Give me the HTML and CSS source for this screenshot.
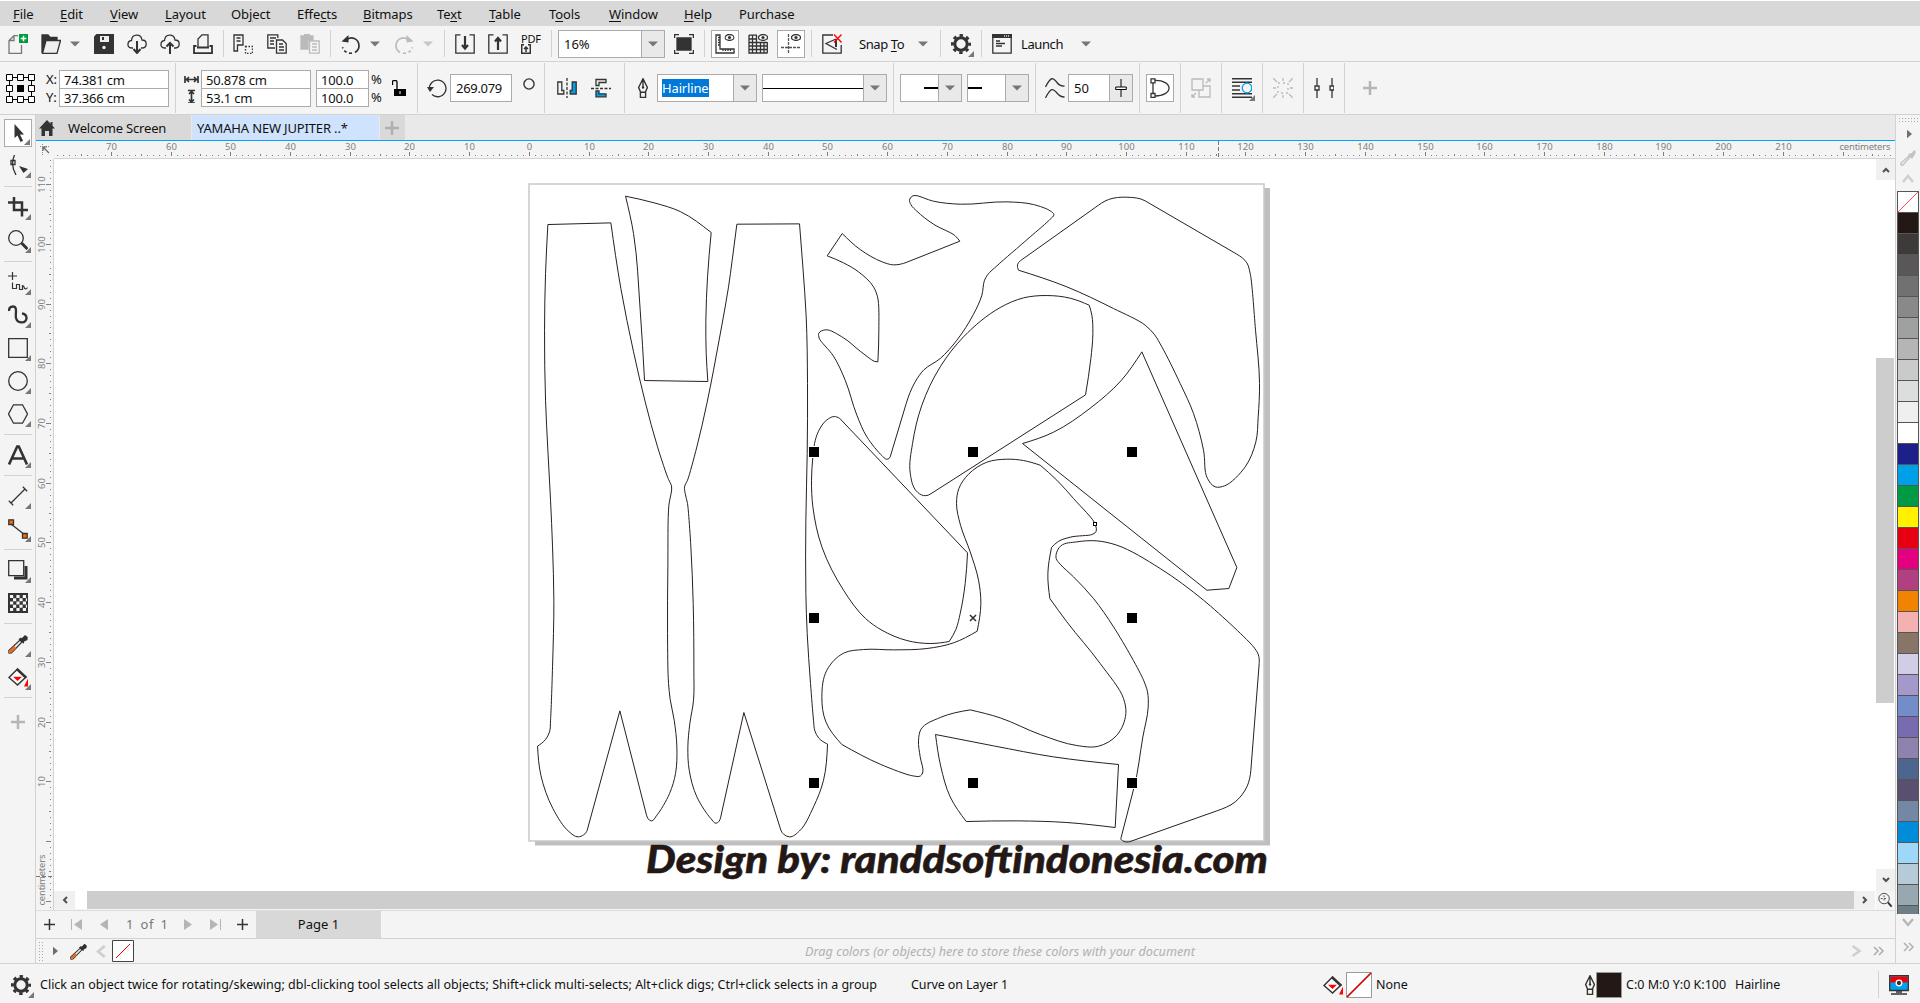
FILE: index.html
```html
<!DOCTYPE html>
<html lang="en">
<head>
<meta charset="utf-8">
<title>YAMAHA NEW JUPITER</title>
<link rel="stylesheet" href="styles.css">
</head>
<body>
<svg class="sprite" aria-hidden="true">
  <symbol id="gear" viewBox="0 0 20 20"><circle cx="10" cy="10" r="6.2" fill="none" stroke="#333" stroke-width="3"/><circle cx="10" cy="10" r="8.6" fill="none" stroke="#333" stroke-width="2.8" stroke-dasharray="3.4 3.354" stroke-dashoffset="1.7"/></symbol>
  <symbol id="pen" viewBox="0 0 20 20"><path d="M10 .7 5.6 9.5l2 4.6h4.8l2-4.6zM10 1v8M7.4 14.4h5.2v5H7.4z" fill="none" stroke="#333" stroke-width="1.4"/><circle cx="10" cy="9.5" r="1.2" fill="#333"/></symbol>
  <symbol id="dropper" viewBox="0 0 20 20"><path d="M1 19 .8 16.500 12 6l2 2L3.500 18.800z" fill="#eee" stroke="#333" stroke-width="1.2"/><path d="m1 19 .3-2.500L6 12l2.200 2-4.700 4.600z" fill="#ec6c17"/><path d="m10.500 5.200 2-1.500 1.500.3L17 1l2.700 2-.2 3-3.300 1.500-.5 2.300z" fill="#2d3036"/></symbol>
  <symbol id="bucket" viewBox="0 0 20 20"><path d="M9.500 2 1 10.500 9.500 18l8.500-8z" fill="#fff" stroke="#333" stroke-width="1.500"/><path d="m9.500 1 9.500 9-2 1.500L8 3z" fill="#333"/><path d="M5 9.800h9L9.500 14zM16 19.500l4-8v8z" fill="red"/></symbol>
  <symbol id="caret" viewBox="0 0 10 6"><path d="M0 .5h10L5 5.500z"/></symbol>
  <symbol id="eye" viewBox="0 0 10 7"><ellipse cx="5" cy="3.500" rx="4.500" ry="2.900" fill="#fff" stroke="#333"/><circle cx="5" cy="3.500" r="1.600" fill="#333"/></symbol>
</svg>

<nav class="menu"><span><u>F</u>ile</span><span><u>E</u>dit</span><span><u>V</u>iew</span><span><u>L</u>ayout</span><span>Ob<u>j</u>ect</span><span>Effe<u>c</u>ts</span><span><u>B</u>itmaps</span><span>Te<u>x</u>t</span><span><u>T</u>able</span><span>T<u>o</u>ols</span><span><u>W</u>indow</span><span><u>H</u>elp</span><span>Purchase</span></nav>

<div class="bar standard">
  <svg class="i" viewBox="0 0 20 20"><path d="M10 1.700H6L1 6.500v12.800h12.500V11M1 6.500h5v-5" stroke="#777"/><path d="M11 0h9v9h-9z" fill="#009b3e" stroke="none"/><path d="M15.500 1.700v5.600M12.700 4.500h5.600" stroke="#fff" stroke-width="1.500"/></svg>
  <svg class="i" viewBox="0 0 20 20"><path d="M1 19V1h6l2 2.500h7v3" fill="#333"/><path d="M1.500 19.300 5 6.500h14.500L16 19.300z" fill="#eee"/></svg>
  <svg class="c"><use href="#caret"/></svg>
  <svg class="i" viewBox="0 0 20 20"><path d="M0 2.500 2.500 0H20v20H0z" fill="#333" stroke="none"/><path d="M6 2h9v6H6z" fill="#eee" stroke="none"/><path d="M8 3h2v3H8z" fill="#333" stroke="none"/><circle cx="10" cy="13.500" r="1.700" fill="#eee" stroke="none"/></svg>
  <svg class="i" viewBox="0 0 20 20"><path d="M6 14H4.500C-.5 13.500 0 7 4.500 6.500 5-.5 14-.5 15 6c5.500 0 5.500 7.500.5 8H14"/><path d="M10 7v11M6.500 15l3.500 4 3.500-4" stroke-width="2"/></svg>
  <svg class="i" viewBox="0 0 20 20"><path d="M6 14H4.500C-.5 13.500 0 7 4.500 6.500 5-.5 14-.5 15 6c5.500 0 5.500 7.500.5 8H14"/><path d="M10 20V9M6.500 12.500 10 9l3.500 3.500" stroke-width="2"/></svg>
  <svg class="i" viewBox="0 0 20 20"><path d="M5 14V5l4-4.200h6V14"/><path d="M3.500 12H1v7.200h18V12h-2.500M4 13.500h12" stroke-width="1.800"/></svg>
  <b class="sep"></b>
  <svg class="i" viewBox="0 0 20 20"><path d="M10 9V1H1v16h3.500V11H10zM3.500 4h4M3.500 7h4"/><path d="M12.500 12.500H19.500v7h-7z" stroke-dasharray="1.500 1.500"/></svg>
  <svg class="i" viewBox="0 0 20 20"><path d="M8 14H.8V.8h10V4M3 4h6M3 7h4M3 10h4"/><path d="M9.500 6h6l3.700 3.500v9.700H9.500zM12 10h4M12 13h5M12 16h5"/></svg>
  <svg class="i faint" viewBox="0 0 20 20"><path d="M1 2h12v4H8v9H1z" fill="#bbb"/><path d="M4 0h6v3H4z" fill="#bbb" stroke="none"/><path d="M9.500 7h9.700v12.200H9.500zM12 10h5M12 13h5M12 16h5"/></svg>
  <b class="sep"></b>
  <svg class="i" viewBox="0 0 20 20"><path d="M5 6.500C10 1 18 5 18 12c0 3-1.500 5-4 6.500" stroke-width="1.700"/><path d="M11 19.200c-5 .5-8-2-9.500-6" stroke-dasharray="3 2.500" stroke-width="1.700"/><path d="M.500 7.500 7.500 1v7.500z" fill="#333" stroke="none"/></svg>
  <svg class="c"><use href="#caret"/></svg>
  <svg class="i faint" viewBox="0 0 20 20"><path d="M15 6.500C10 1 2 5 2 12c0 3 1.500 5 4 6.500" stroke-width="1.700"/><path d="M9 19.200c5 .5 8-2 9.500-6" stroke-dasharray="3 2.500" stroke-width="1.700"/><path d="m19.500 7.500-7-6.500v7.500z" fill="#bbb" stroke="none"/></svg>
  <svg class="c pale"><use href="#caret"/></svg>
  <b class="sep"></b>
  <svg class="i" viewBox="0 0 20 20"><path d="M5.500.8H.8v18.400h18.400V.8h-4.700"/><path d="M10 2v12M7 11l3 3.500 3-3.500" stroke-width="2.200"/></svg>
  <svg class="i" viewBox="0 0 20 20"><path d="M5.500.8H.8v18.400h18.400V.8h-4.700"/><path d="M10 16V4M7 7.500 10 4l3 3.500" stroke-width="2.200"/></svg>
  <span class="pdf">PDF<svg viewBox="0 0 10 10"><path d="M3 .7H.7v8.600h8.600V.7H7M5 8V3M3 5l2-2 2 2" fill="none" stroke="#333" stroke-width="1.500"/></svg></span>
  <b class="sep"></b>
  <span class="combo zoom"><span>16%</span><em><svg class="c"><use href="#caret"/></svg></em></span>
  <svg class="i" viewBox="0 0 20 20"><path d="M3 4h14v12H3z" fill="#333"/><path d="M.6 4V.6H5M15 .6h4.400V4M19.400 16v3.400H15M5 19.400H.6V16"/></svg>
  <b class="sep"></b>
  <span class="toggle"><svg class="i" viewBox="0 0 20 20"><path d="M1 1h4v14h14v4H1zM3 3.500h2M3 6h2M3 8.500h2M3 11h2M8 17v-2M10.500 17v-2M13 17v-2M15.500 17v-2"/><use href="#eye" x="9.500" width="10" height="7"/></svg></span>
  <svg class="i" viewBox="0 0 20 20"><path d="M1 1v18h18.500M4.500 1v18M8.500 1v18M12.500 8v11M16 8v11M19.300 8v11M1 1.200h8M1 5h8M1 8.500h18M1 12h18M1 15.500h18"/><use href="#eye" x="10" width="10" height="7"/></svg>
  <span class="toggle"><svg class="i" viewBox="0 0 20 20"><path d="M7.500 0v20M0 13.500h20" stroke="#555" stroke-dasharray="3 1"/><use href="#eye" x="10" width="10" height="7"/></svg></span>
  <b class="sep"></b>
  <svg class="i" viewBox="0 0 20 20"><path d="M11 1H.8v18.200h18.400V11M14 5 4 9.500l11 6"/><path d="m14 5 0 8" stroke-width="2"/><path d="m12 .5 7.500 8M19.500.5l-7.500 8" stroke="red"/></svg>
  <span class="t">Snap <u>T</u>o</span>
  <svg class="c"><use href="#caret"/></svg>
  <b class="sep"></b>
  <span class="flag"><svg class="i"><use href="#gear"/></svg></span>
  <b class="sep"></b>
  <svg class="i" viewBox="0 0 20 20"><path d="M.8.8h18.400v18.400H.8zM4 7h4M4 9.500h9M4 12h6"/><path d="M0 0h20v4H0z" fill="#333" stroke="none"/><path d="M12 2h6" stroke="#ddd" stroke-dasharray="1 1"/></svg>
  <span class="t">Launch</span>
  <svg class="c"><use href="#caret"/></svg>
</div>

<div class="bar property">
  <svg class="origin" viewBox="0 0 29 29"><path d="M3.500 3.500h22v22h-22z" fill="none" stroke="#000"/><g fill="#fff" stroke="#000"><path d="M.5.500h6v6h-6zM11.500.500h6v6h-6zM22.500.500h6v6h-6zM.5 11.500h6v6h-6zM22.500 11.500h6v6h-6zM.5 22.500h6v6h-6zM11.500 22.500h6v6h-6zM22.500 22.500h6v6h-6z"/></g><path d="M11 11h7v7h-7z"/></svg>
  <span class="pair"><i>X:</i><i>Y:</i></span>
  <span class="fields"><i>74.381 cm</i><i>37.366 cm</i></span>
  <b class="sep"></b>
  <svg class="size" viewBox="0 0 15 30"><path d="M1 3v7M14 3v7M2 6.500h11M5 4 2.500 6.500 5 9M10 4l2.500 2.500L10 9M4 17.500h7M4 30h7M7.500 18v12M5 21l2.500-2.500L10 21M5 26.500 7.500 29l2.500-2.500" fill="none" stroke="#333" stroke-width="1.700"/></svg>
  <span class="fields"><i>50.878 cm</i><i>53.1 cm</i></span>
  <span class="fields short"><i>100.0</i><i>100.0</i></span>
  <span class="pair"><i>%</i><i>%</i></span>
  <svg class="lock" viewBox="0 0 14 16"><path d="M2 9h12v7H2z"/><path d="M5 9V2q0-1.500-1.500-1.500H2Q.500.500.500 2v3" fill="none" stroke="#000" stroke-width="1.300"/><path d="M8 11v3" stroke="#fff"/></svg>
  <b class="sep"></b>
  <svg class="i" viewBox="0 0 20 20"><path d="M2.500 12a8.300 8.300 0 1 1 2.500 4.500"/><path d="M0 9h7l-4 5z" fill="#333" stroke="none"/></svg>
  <span class="combo angle"><span>269.079</span></span>
  <svg class="deg" viewBox="0 0 12 12"><circle cx="6" cy="6" r="5.100" fill="none" stroke="#333" stroke-width="1.400"/></svg>
  <b class="sep"></b>
  <svg class="i" viewBox="0 0 20 20"><path d="M.8 4v12h6v-3.500h-2V4z"/><path d="M19.200 4v12h-6v-3.500h2V4z" fill="#00a0f0"/><path d="M10 0v20" stroke-dasharray="3 1.500"/></svg>
  <svg class="i" viewBox="0 0 20 20"><path d="M15 1.500H5V7.500h3V4.500h7z"/><path d="M15 18.800H5v-6h3v3h7z" fill="#00a0f0"/><path d="M0 10.500h20" stroke-dasharray="3 1.500"/></svg>
  <b class="sep"></b>
  <svg class="i nib"><use href="#pen"/></svg>
  <span class="combo width"><span><mark>Hairline</mark></span><em><svg class="c"><use href="#caret"/></svg></em></span>
  <span class="combo style"><span><hr></span><em><svg class="c"><use href="#caret"/></svg></em></span>
  <b class="sep"></b>
  <span class="combo tip start"><span><hr></span><em><svg class="c"><use href="#caret"/></svg></em></span>
  <span class="combo tip end"><span><hr></span><em><svg class="c"><use href="#caret"/></svg></em></span>
  <b class="sep"></b>
  <svg class="i" viewBox="0 0 20 20"><path d="M.5 9C6-2 8-.5 12 4.500q3 4 7.500 3.500M.5 20C6 9 8 10.500 12 15q3 4 7.500 4"/></svg>
  <span class="combo smooth"><span>50</span><em><svg viewBox="0 0 12 18"><path d="M6 0v18" stroke="#000"/><path d="M.700 8h10.600v2.500H.7z" fill="#fff" stroke="#000"/></svg></em></span>
  <b class="sep"></b>
  <span class="toggle"><svg class="i" viewBox="0 0 20 20"><path d="M4 2.500c20-1 20 16 0 15.500M3 4v12"/><path d="M1 .8h4v4H1zM1 15.500h4v4H1z" fill="#fff"/></svg></span>
  <b class="sep"></b>
  <svg class="i faint" viewBox="0 0 20 20"><path d="M1 1h11v11H1zM8 12v7h11V8h-7M1 19l4-4M19 1l-4 4M16 1h3v3M1 16v3h3"/></svg>
  <b class="sep"></b>
  <span class="flag"><svg class="i" viewBox="0 0 20 20"><path d="M0 .8h20M0 4.200h20M0 8h8M0 12h8M0 15.800h20M0 19.300h20" stroke-width="1.500"/><circle cx="15" cy="10" r="4.800" fill="#f4f4f4" stroke="#00a0f0"/></svg></span>
  <b class="sep"></b>
  <svg class="i faint" viewBox="0 0 20 20"><path d="M5 5h10v10H5z" stroke-dasharray="2 3"/><path d="m0 0 4 4M20 0l-4 4M0 20l4-4M20 20l-4-4M10 0v3M10 17v3M0 10h3M17 10h3"/></svg>
  <b class="sep"></b>
  <svg class="i" viewBox="0 0 20 20"><path d="M3 0v7.500M3 12v8M18 0v7.500M18 12v8" stroke="#777" stroke-width="2"/><path d="M1 8h4v4H1zM16 8h4v4h-4z"/></svg>
  <b class="sep"></b>
  <svg class="plus" viewBox="0 0 14 14"><path d="M7 0v14M0 7h14" stroke="#b5b5b5" stroke-width="2.500"/></svg>
</div>

<main>
  <aside class="tools">
    <span class="tool on flag"><svg class="i" viewBox="0 0 20 20"><path d="m6.500 1 0 14 3-2.500 3 6.500 2.500-1.200L12 11.500h4z" fill="#333" stroke="none"/></svg></span>
    <span class="tool flag"><svg class="i" viewBox="0 0 20 20"><path d="M6.500 0Q2 10 8 20M3 5.500h4v4H3z"/><path d="m11 11 9 3-4.500 4z" fill="#333" stroke="none"/></svg></span>
    <b class="rule wide"></b>
    <span class="tool flag"><svg class="i" viewBox="0 0 20 20"><path d="M0 5.500h14v14M6 0v13h14" stroke-width="2.500"/></svg></span>
    <span class="tool flag"><svg class="i" viewBox="0 0 20 20"><circle cx="8" cy="8" r="7.300"/><path d="m13.500 13 6 6" stroke-width="3"/></svg></span>
    <b class="rule wide"></b>
    <span class="tool flag"><svg class="i" viewBox="0 0 20 20"><path d="M0 4h9M4.500 0v8M4.500 10.500v6h4v-4h3v5h3v-4q1.500 0 2 3 2 1 3-1" stroke-width="1.200"/></svg></span>
    <span class="tool flag"><svg class="i" viewBox="0 0 20 20"><path d="M1 6q0-4.500 4-4.500c5 0 2 8 3 11.500 1.500 6 11 6 10.500-.5Q18 9 14 8.500" stroke-width="2.300"/></svg></span>
    <span class="tool flag"><svg class="i" viewBox="0 0 20 20"><path d="M.7.700h18.600v18.600H.7z"/></svg></span>
    <span class="tool flag"><svg class="i" viewBox="0 0 20 20"><circle cx="10" cy="10" r="9.300"/></svg></span>
    <span class="tool flag"><svg class="i" viewBox="0 0 20 20"><path d="M5.500.800h9l5 9.200-5 9.200h-9L.5 10z"/></svg></span>
    <b class="rule"></b>
    <span class="tool flag"><svg class="i" viewBox="0 0 20 20"><path d="m1 19.500 8.200-18h1.600l8.200 18M4 13.500h12" stroke-width="2.600"/></svg></span>
    <b class="rule"></b>
    <span class="tool flag"><svg class="i" viewBox="0 0 20 20"><path d="M3 17 17 3M.8 14.800l4.400 4.400M14.800.8l4.400 4.400"/></svg></span>
    <span class="tool flag"><svg class="i" viewBox="0 0 20 20"><path d="m3 5 14 11"/><path d="M.8.800h4.700v4.700H.8zM14.500 14.500h4.700v4.700h-4.700z" fill="#ff6a00"/></svg></span>
    <b class="rule"></b>
    <span class="tool flag"><svg class="i" viewBox="0 0 20 20"><path d="M6 18h12V6" stroke-width="3"/><path d="M.7.700h15v15H.7z" fill="#f4f4f4"/></svg></span>
    <span class="tool"><svg class="i" viewBox="0 0 20 20"><path d="M0 0h20v20H0z" fill="#333" stroke="none"/><path d="M2 3.500h16M2 10h16M2 16.500h16" stroke="#f4f4f4" stroke-width="3" stroke-dasharray="3.200 3.200"/><path d="M5 6.800h14M5 13.200h14" stroke="#f4f4f4" stroke-width="3" stroke-dasharray="3.200 3.200"/></svg></span>
    <b class="rule"></b>
    <span class="tool flag"><svg class="i"><use href="#dropper"/></svg></span>
    <span class="tool flag"><svg class="i"><use href="#bucket"/></svg></span>
    <b class="rule"></b>
    <span class="tool more"><svg class="plus" viewBox="0 0 14 14"><path d="M7 0v14M0 7h14" stroke="#b5b5b5" stroke-width="2.500"/></svg></span>
  </aside>

  <section class="desk">
    <div class="tabs">
      <span class="tab"><svg viewBox="0 0 16 16"><path d="M8 0 0 8.500h2.500V16H6v-5h4v5h3.500V8.500H16l-2.500-2.700V2h-2v1.700z" fill="#333"/></svg>Welcome Screen</span>
      <span class="tab active">YAMAHA NEW JUPITER ..*</span>
      <span class="tab add"><svg class="plus" viewBox="0 0 14 14"><path d="M7 0v14M0 7h14" stroke="#b0b0b0" stroke-width="2.500"/></svg></span>
    </div>
    <div class="view">
      <svg class="corner" viewBox="0 0 18 18"><path d="M4 5.500h10M6.500 3v12" fill="none" stroke="#888" stroke-dasharray="1 1"/><path d="M7 6l6 6M7 10V6h4" fill="none" stroke="#666" stroke-width="1.200"/></svg>
      <svg class="ruler-x" viewBox="54 141 1841 18"></svg>
      <svg class="ruler-y" viewBox="36 159 18 751"></svg>
      <div class="stage">
        <svg class="art" viewBox="54 159 1822 732">
          <path d="M535 841h735v4.500H535zM1264 188h6v657h-6z" fill="#bfbfbf"/>
          <rect x="529" y="184" width="735" height="657" fill="#fff" stroke="#c9c9c9" stroke-width="1.500"/>
          <g id="curves" transform="translate(520.2 170.200) scale(.33333)"></g>
          <g id="handles"></g>
          <path d="m970 615 6 6M976 615l-6 6" stroke="#333" stroke-width="1.600"/>
          <rect x="1093.500" y="522.500" width="3" height="3" fill="#fff" stroke="#000"/>
          <text class="credit" x="646" y="873" textLength="622" lengthAdjust="spacingAndGlyphs">Design by: randdsoftindonesia.com</text>
        </svg>
        <div class="vscroll"><span><svg viewBox="0 0 8 6"><path d="m1 5 3-3 3 3"/></svg></span><b></b><span class="down"><svg viewBox="0 0 8 6"><path d="m1 1 3 3 3-3"/></svg></span></div>
        <div class="hscroll"><span><svg viewBox="0 0 6 8"><path d="M5 1 2 4l3 3"/></svg></span><b></b><span><svg viewBox="0 0 6 8"><path d="m1 1 3 3-3 3"/></svg></span></div>
        <svg class="nav" viewBox="0 0 20 19"><circle cx="8.500" cy="8" r="5.500" fill="none" stroke="#444"/><path d="m12.500 12 4 4.500" stroke="#333" stroke-width="2"/><path d="M8.500 4.500v7M5 8h7" stroke="#555" stroke-dasharray="2 1.500"/></svg>
      </div>
    </div>
    <div class="pages">
      <svg class="p" viewBox="0 0 11 11"><path d="M5.500 0v11M0 5.500h11" stroke="#333" stroke-width="1.500"/></svg>
      <svg class="p" viewBox="0 0 11 11"><path d="M.500 0v11" stroke="#b5b5b5"/><path d="M11 0v11L3 5.500z" fill="#b5b5b5"/></svg>
      <svg class="p" viewBox="0 0 11 11"><path d="M9 0v11L1 5.500z" fill="#b5b5b5"/></svg>
      <span class="count">1 of 1</span>
      <svg class="p" viewBox="0 0 11 11"><path d="M0 0v11l8-5.500z" fill="#b5b5b5"/></svg>
      <svg class="p" viewBox="0 0 11 11"><path d="M10.500 0v11" stroke="#b5b5b5"/><path d="M0 0v11l8-5.500z" fill="#b5b5b5"/></svg>
      <svg class="p" viewBox="0 0 11 11"><path d="M5.500 0v11M0 5.500h11" stroke="#333" stroke-width="1.500"/></svg>
      <span class="page">Page 1</span>
    </div>
    <div class="docpal">
      <i class="grip"></i>
      <svg class="tri" viewBox="0 0 6 10"><path d="M0 0v10l6-5z"/></svg>
      <svg class="i drop"><use href="#dropper"/></svg>
      <svg class="lt" viewBox="0 0 10 14"><path d="M9 1 2 7l7 6" fill="none" stroke="#cfcfcf" stroke-width="3"/></svg>
      <svg class="none" viewBox="0 0 22 22"><path d="M.5.500h21v21H.5z" fill="#fff" stroke="#444"/><path d="M4 18 18 4" stroke="red"/></svg>
      <span class="hint">Drag colors (or objects) here to store these colors with your document</span>
      <svg class="gt" viewBox="0 0 10 12"><path d="m1 1 7 5-7 5" fill="none" stroke="#cfcfcf" stroke-width="2.500"/></svg>
      <svg class="gt" viewBox="0 0 11 12"><path d="m1 2 4 4-4 4M6 2l4 4-4 4" fill="none" stroke="#aaa" stroke-width="1.500"/></svg>
    </div>
  </section>

  <aside class="palette">
    <i class="grip flat"></i>
    <svg class="tri" viewBox="0 0 6 10"><path d="M0 0v10l6-5z"/></svg>
    <svg class="dim" viewBox="0 0 16 16"><path d="M1 15v-2l8-7 1 1-7 8z" fill="none" stroke="#c2c2c2" stroke-width="1.300"/><path d="m8 4 4-1 2-3 2 2-2 4-2 3z" fill="#c2c2c2"/></svg>
    <svg class="up" viewBox="0 0 12 9"><path d="m1 8 5-6 5 6" fill="none" stroke="#cfcfcf" stroke-width="2.500"/></svg>
    <div class="swatches"></div>
    <svg class="dn" viewBox="0 0 12 9"><path d="m1 1 5 6 5-6" fill="none" stroke="#b5b5b5" stroke-width="2.200"/></svg>
    <svg class="dbl" viewBox="0 0 11 10"><path d="m1 1 4 4-4 4M6 1l4 4-4 4" fill="none" stroke="#b0b0b0" stroke-width="1.500"/></svg>
  </aside>
</main>

<footer class="status">
  <span class="flag"><svg class="i"><use href="#gear"/></svg></span>
  <span class="tip-text">Click an object twice for rotating/skewing; dbl-clicking tool selects all objects; Shift+click multi-selects; Alt+click digs; Ctrl+click selects in a group</span>
  <span class="obj">Curve on Layer 1</span>
  <svg class="i"><use href="#bucket"/></svg>
  <svg class="chip" viewBox="0 0 26 26"><path d="M.5.500h25v25H.5z" fill="#fff" stroke="#999"/><path d="M1 25 25 1" stroke="#d00000" stroke-width="1.700"/></svg>
  <span>None</span>
  <svg class="i nib"><use href="#pen"/></svg>
  <svg class="chip" viewBox="0 0 26 26"><path d="M.5.500h25v25H.5z" fill="#231815" stroke="#999"/></svg>
  <span class="ink">C:0 M:0 Y:0 K:100</span>
  <span class="hair">Hairline</span>
  <b class="sep"></b>
  <svg class="i" viewBox="0 0 20 20"><path d="M.7.700h18.600v14.800H.7z" fill="#00a0f0"/><path d="M1.500 1.500h17v6h-17z" fill="#f00000" stroke="none"/><circle cx="10" cy="8" r="2.800" fill="#333" stroke="#fff"/><path d="M2 19h16M7 17h6" stroke-width="1.500"/></svg>
</footer>
<script src="script.js"></script>
</body>
</html>
```
FILE: styles.css
```css
* { box-sizing: border-box; }
body {
  margin: 0; width: 1920px; height: 1003px; overflow: hidden;
  display: flex; flex-direction: column;
  font: 13px/18px "Noto Sans", "Open Sans", sans-serif; color: #111;
  background: #f4f4f4;
}
svg { display: block; flex: none; }
i { font-style: normal; }
u { text-underline-offset: 2px; }
.sprite { position: absolute; width: 0; height: 0; }
.i { width: 20px; height: 20px; fill: none; stroke: #333; stroke-width: 1.3; }
.i use { stroke: none; }
.faint { stroke: #bbb; }
.c { width: 10px; height: 6px; fill: #777; }
.pale { fill: #c6c6c6; }
.plus { width: 14px; height: 14px; }

.menu {
  flex: none; height: 26px; padding-left: 13px; border-top: 1px solid #fff; background: #d8d8d8;
  display: grid; grid-template-columns: 47px 50px 55px 66px 66px 66px 74px 52px 60px 60px 75px 55px auto;
  align-items: center; letter-spacing: -.08px;
}
.bar { flex: none; display: grid; align-items: center; justify-items: start; border-bottom: 1px solid #d2d2d2; }
.bar > * { flex: none; }
.standard {
  height: 36px; padding-left: 8px;
  grid-template-columns: 33px 29px 24px 33px 33px 33px 30px 10px 34px 33px 30px 11px 29px 24px 29px 21px 11px 33px 33px 30px 7px 116px 30px 7px 37px 29px 34px 11px 37px 59px 22px 11px 30px 11px 29px 60px 20px;
}
.property {
  height: 53px; padding-left: 6px;
  grid-template-columns: 40px 13px 116px 9px 17px 115px 55px 21px 25px 10px 23px 73px 21px 13px 34px 33px 14px 19px 105px 131px 7px 67px 68px 10px 23px 71px 7px 34px 11px 30px 11px 30px 11px 30px 11px 30px 19px 14px;
}
.sep { width: 1px; height: 27px; background: #d2d2d2; }
.property .sep { height: 50px; }
.t { white-space: nowrap; letter-spacing: -.4px; }
.flag { position: relative; }
.flag::after {
  content: ""; position: absolute; right: -3px; bottom: -3px;
  border: 3px solid #777; border-top-color: transparent; border-left-color: transparent;
}
.pdf { font-size: 11px; line-height: 10px; height: 20px; letter-spacing: -.2px; }
.pdf svg { width: 10px; height: 10px; }

.combo { display: flex; height: 28px; border: 1px solid #ababab; background: #fff; }
.combo > span { flex: 1; padding-left: 5px; align-self: center; white-space: nowrap; }
.combo em { width: 23px; border-left: 1px solid #ababab; background: #e9e9e9; display: flex; align-items: center; justify-content: center; }
.combo hr { margin: 0; border: 0; height: 1px; background: #000; }
.zoom { width: 107px; }
.angle { width: 62px; }
.angle > span { letter-spacing: -.3px; }
.width { width: 100px; }
.width > span { padding-left: 4px; letter-spacing: -.15px; }
mark { background: #0078d7; color: #fff; }
.style { width: 125px; }
.style > span, .tip > span { padding: 0; }
.tip { width: 62px; }
.tip hr { width: 14px; height: 2px; }
.start hr { margin-left: auto; }
.smooth { width: 65px; }
.smooth svg { width: 12px; height: 18px; fill: none; }
.toggle { width: 28px; height: 28px; border: 1px solid #ababab; background: #fff; display: grid; place-items: center; }
.toggle .i { width: 20px; }
.origin { width: 29px; height: 29px; }
.size { width: 15px; height: 30px; }
.pair i, .fields i { display: block; height: 18px; line-height: 18px; }
.fields { width: 110px; border: 1px solid #ababab; background: #fff; }
.fields i { padding-left: 4px; height: 17px; letter-spacing: -.2px; }
.fields i + i { border-top: 1px solid #ababab; height: 18px; }
.short { width: 53px; }
.lock { width: 14px; height: 16px; }
.deg { width: 12px; height: 12px; margin-bottom: 9px; }
.nib { margin-left: -5px; }

main { flex: none; height: 848px; display: flex; }
.tools { width: 36px; flex: none; border-right: 1px solid #d2d2d2; padding-top: 3px; display: flex; flex-direction: column; align-items: center; }
.tool { width: 28px; height: 28px; flex: none; margin-bottom: 5px; display: grid; place-items: center; }
.tool.on { border: 1px solid #ababab; background: #fff; margin: 1px 0 4px; }
.tool.flag::after { right: 1px; bottom: 1px; }
.rule { flex: none; width: 28px; height: 1px; margin: 1px 0 6px; background: #d2d2d2; }
.wide { margin: 2px 0 6px; }
.more { margin-top: 4px; }

.desk { width: 1859px; flex: none; display: flex; flex-direction: column; }
.tabs { height: 26px; flex: none; display: flex; gap: 1px; background: #e9e9e9; border-bottom: 1px solid #00a3ff; }
.tab { background: #d9d9d9; display: flex; align-items: center; width: 155px; padding: 1px 0 0 3px; letter-spacing: -.18px; white-space: nowrap; }
.tab svg { width: 16px; height: 16px; margin-right: 13px; }
.active { width: 187px; background: #cfe3ff; padding-left: 5px; letter-spacing: -.16px; }
.add { width: 25px; padding-left: 5px; }
.add svg { margin: 0; width: 14px; height: 14px; }
.view { height: 769px; display: grid; grid-template: 18px 751px / 18px 1841px; }
.corner { width: 18px; height: 18px; }
.ruler-x { width: 1841px; height: 18px; }
.ruler-y { width: 18px; height: 751px; }
.ruler-x text, .ruler-y text { font-size: 9.500px; fill: #808080; text-anchor: middle; }
.stage { display: grid; grid-template: 732px 19px / 1822px 19px; background: #f4f4f4; }
.art { width: 1822px; height: 732px; background: #fff; }
.credit { font: italic 900 37px "Forte", "Lato", sans-serif; fill: #231815; stroke: #231815; stroke-width: .5; }
#curves path { fill: none; stroke: #2a201d; stroke-width: 1; vector-effect: non-scaling-stroke; }
.vscroll { width: 19px; background: #fff; display: flex; flex-direction: column; }
.vscroll span, .hscroll span { background: #f0f0f0; display: grid; place-items: center; }
.vscroll span { height: 21px; }
.vscroll .down { height: 22px; margin-top: auto; }
.vscroll b { margin-top: 178px; width: 18px; height: 345px; background: #cdcdcd; }
.vscroll svg { width: 8px; height: 6px; }
.hscroll svg { width: 6px; height: 8px; }
.vscroll path, .hscroll path { fill: none; stroke: #505050; stroke-width: 2; }
.hscroll { height: 18px; background: #fff; display: flex; }
.hscroll span { width: 21px; }
.hscroll b { margin-left: 12px; width: 1767px; background: #cdcdcd; }
.nav { width: 19px; height: 18px; }

.pages { height: 29px; flex: none; border-top: 1px solid #dcdcdc; border-bottom: 1px solid #d2d2d2; padding-left: 8px; display: grid; grid-template-columns: 27px 28px 27px 58px 26px 27px 19px 125px; align-items: center; }
.p { width: 11px; height: 11px; margin-bottom: 1px; }
.count { color: #777; letter-spacing: .8px; word-spacing: 2px; margin-bottom: 1px; }
.page { align-self: stretch; background: #d8d8d8; display: grid; place-items: center; padding-bottom: 2px; }
.docpal { height: 24px; flex: none; display: flex; align-items: center; }
.grip { width: 6px; height: 20px; margin-left: 2px; background: radial-gradient(#aaa 35%, transparent 40%) 0 0/3px 3px; }
.tri { width: 5px; height: 10px; margin-left: 9px; fill: #6e6e6e; }
.drop { width: 17px; height: 17px; margin-left: 12px; }
.lt { width: 10px; height: 13px; margin-left: 9px; }
.none { width: 22px; height: 22px; margin-left: 6px; }
.hint { flex: 1; padding-left: 15px; text-align: center; font-style: italic; color: #b0b0b0; font-size: 12.670px; }
.docpal .gt { width: 11px; height: 12px; margin-right: 11px; }

.palette { width: 25px; flex: none; border-left: 1px solid #d2d2d2; display: flex; flex-direction: column; align-items: center; }
.flat { width: 20px; height: 6px; margin: 2px 0 0; }
.palette .tri { margin: 6px 0 0 3px; }
.dim { width: 16px; height: 16px; margin-top: 11px; }
.up { width: 12px; height: 9px; margin-top: 8px; }
.swatches { width: 22px; height: 723px; margin: 8px 0 0; flex: none; overflow: hidden; border: 1px solid #555; border-bottom: 0; }
.swatches span { display: block; height: 21px; border-bottom: 1px solid #555; }
.swatches .blank { background: linear-gradient(135deg, #fff 48%, #f55 49%, #f55 51%, #fff 52%); }
.dn { width: 12px; height: 9px; margin-top: 4px; }
.dbl { width: 11px; height: 10px; margin-top: 15px; }

.status {
  flex: none; height: 40px; border-top: 1px solid #d2d2d2; padding: 2px 0 0 11px;
  display: grid; align-items: center; justify-items: start; white-space: nowrap; font-size: 12.500px;
  grid-template-columns: 29px 871px 412px 23px 30px 209px 11px 30px 109px 143px 11px 20px;
}
.status .flag { margin: 0; }
.chip { width: 26px; height: 26px; }
.obj, .hair { letter-spacing: -.1px; }
```
FILE: script.js
```js
const SVG = "http://www.w3.org/2000/svg";
function add(parent, tag, attrs, text) {
  const el = document.createElementNS(SVG, tag);
  for (const k in attrs) el.setAttribute(k, attrs[k]);
  if (text !== undefined) el.textContent = text;
  parent.appendChild(el);
}

// Rulers: one centimetre is 5.971px, the origin is the page's lower left corner.
const CM = 5.971, X0 = 529.4, Y0 = 841.5;
const rx = document.querySelector(".ruler-x"), ry = document.querySelector(".ruler-y");
let dx = "", dy = "";
for (let n = -79; n <= 228; n++) {
  const x = Math.round(X0 + n * CM - .5) + .5;
  const len = n % 10 === 0 ? 4 : n % 5 === 0 ? 2 : 1;
  dx += `M${x} 156v-${len}`;
  if (n % 10 === 0 && n >= -70 && n <= 210) add(rx, "text", { x, y: 150 }, Math.abs(n));
}
for (let n = -11; n <= 114; n++) {
  const y = Math.round(Y0 - n * CM - .5) + .5;
  const len = n % 10 === 0 ? 5 : n % 5 === 0 ? 2 : 1;
  dy += `M51 ${y}h-${len}`;
  if (n % 10 === 0 && n > 0) add(ry, "text", { transform: `translate(45 ${y}) rotate(-90)` }, n);
}
add(rx, "path", { d: dx, stroke: "#808080" });
add(ry, "path", { d: dy, stroke: "#808080" });
add(rx, "path", { d: "M54 158.500h1841", stroke: "#d2d2d2" });
add(ry, "path", { d: "M53.500 159v751", stroke: "#d2d2d2" });
add(rx, "path", { d: "M1218.500 141v18", stroke: "#777", "stroke-dasharray": "4 2" });
add(ry, "path", { d: "M36 876.500h18", stroke: "#777", "stroke-dasharray": "4 2" });
add(rx, "text", { x: 1865, y: 150, textLength: 51 }, "centimeters");
add(ry, "text", { transform: "translate(45 880) rotate(-90)", textLength: 51 }, "centimeters");

// Outlines: "!" marks a corner, "-" a straight run to the next point.
const OUTLINES = [
  "83,163!- 272,158! 302,355 340,545 375,695 412,830 445,928 454,947 446,1005 443,1190 442,1390 445,1540 450,1588 462,1650 470,1730 466,1810 448,1870 410,1935 393,1952 379,1935- 299,1622!- 201,1980 174,2000 146,1984 98,1915 62,1815 52,1728! 76,1708 88,1685 91,1650 97,1490 101,1290 97,1130 91,990 83,840 76,690 73,480 76,310",
  "650,162!- 838,161! 848,290 858,440 862,640 861,850 857,1050 857,1270 861,1390 871,1540 880,1650 884,1682 896,1704 922,1722! 910,1830 880,1910 838,1982 808,2000 782,1980- 671,1627!- 601,1943 588,1959 572,1945 530,1880 507,1800 503,1730 509,1660 520,1590 521,1500 519,1300 512,1130 505,1030 502,1000 495,970 493,950 502,930 530,830 560,700 580,600 605,465 625,350 636,270",
  "316,78! 402,98 480,124 573,187! 562,320 557,450 558,550 563,634!- 373,631! 360,420 340,190",
  "966,190! 1020,238 1086,275 1120,284 1160,276- 1319,213! 1304,196 1240,162 1190,123 1172,103 1168,90 1176,78 1187,76 1240,93 1320,102 1460,95 1540,103 1590,122 1601,133 1590,147 1530,200 1430,287 1402,314 1393,330 1385,375 1360,432 1310,510 1260,565 1210,600 1185,635 1158,700- 1110,860 1100,867 1085,856 1040,800 1010,735 975,630 940,558 897,504 896,489 915,479 970,503 1020,543 1062,573 1073,575! 1076,480 1072,380 1060,350 1015,305 970,278 921,257!-",
  "1495,300! 1492,284 1500,272- 1725,112 1765,88 1820,81 1875,92- 2150,252 2180,278 2190,310 2206,480 2218,640 2214,740 2207,815 2175,890 2113,947 2085,950 2062,925 2050,840 2020,730 1980,640 1925,530 1902,492 1875,465 1780,415 1640,350",
  "1707,405! 1715,435 1718,490 1712,565 1696,674!- 1230,972 1210,976 1188,962 1170,908 1177,820 1205,705 1260,590 1330,500 1440,412 1510,383 1580,376 1650,384",
  "1865,545!- 2150,1192!- 2126,1255!- 2060,1260!- 1507,820! 1600,786 1710,714 1802,632",
  "958,744!- 1342,1148! 1335,1240 1320,1330 1307,1378 1287,1414! 1230,1420 1160,1411 1085,1380 1036,1345 970,1260 905,1130 878,1010 874,930 878,860 883,820 895,783 920,749 942,739",
  "1560,885! 1510,871 1460,867 1400,876 1345,912 1316,955 1309,1000 1321,1065 1350,1145 1375,1230 1382,1300 1371,1383! 1300,1418 1220,1435 1120,1439 1030,1438 970,1449 920,1500 905,1580 917,1655 965,1723! 1080,1782 1178,1817 1201,1817 1208,1805 1200,1760 1195,1710 1202,1678 1260,1642 1350,1619! 1440,1643 1560,1693 1670,1726 1735,1728 1790,1695 1817,1630 1810,1585 1740,1480 1640,1355 1589,1285! 1583,1210 1594,1132! 1614,1114 1650,1101 1715,1093 1727,1085 1725,1062 1660,985 1610,930",
  "1790,1125 1920,1195 2050,1290 2200,1430 2214,1452 2217,1480- 2192,1800 2180,1850 2145,1895 2090,1922- 1830,2014 1810,2013 1802,2005- 1842,1850 1868,1700 1884,1610 1882,1565 1870,1530 1780,1370 1720,1285 1660,1220 1620,1182 1608,1165 1609,1148 1622,1127 1670,1115 1730,1112",
  "1246,1693! 1420,1727 1600,1760 1795,1783!- 1785,1972! 1640,1957 1490,1952 1338,1954! 1290,1880 1262,1790"
];
function outline(src) {
  const p = src.split(" ").map(s => {
    const [x, y] = s.replace(/[!-]/g, "").split(",").map(Number);
    return { x, y, corner: s.includes("!"), line: s.includes("-") };
  });
  const n = p.length, at = i => p[(i + n) % n];
  const unit = (a, b) => { const l = Math.hypot(b.x - a.x, b.y - a.y); return { x: (b.x - a.x) / l, y: (b.y - a.y) / l, l }; };
  p.forEach((q, i) => {
    const a = unit(at(i - 1), q), b = unit(q, at(i + 1));
    q.max = Infinity;
    if (at(i - 1).line) q.t = a;
    else if (q.line) q.t = b;
    else {
      const wa = Math.sqrt(b.l), wb = Math.sqrt(a.l);
      const x = a.x * wa + b.x * wb, y = a.y * wa + b.y * wb, l = Math.hypot(x, y) || 1;
      q.t = { x: x / l, y: y / l };
      q.max = Math.min(a.l, b.l) * .7;
    }
  });
  let d = `M${p[0].x} ${p[0].y}`;
  for (let i = 0; i < n; i++) {
    const a = at(i), b = at(i + 1);
    if (a.line || (a.corner && b.corner)) { d += `L${b.x} ${b.y}`; continue; }
    const k = unit(a, b).l / 3, ka = Math.min(k, a.max), kb = Math.min(k, b.max);
    let c1 = { x: a.x + a.t.x * ka, y: a.y + a.t.y * ka };
    let c2 = { x: b.x - b.t.x * kb, y: b.y - b.t.y * kb };
    if (a.corner) c1 = { x: (a.x + c2.x) / 2, y: (a.y + c2.y) / 2 };
    if (b.corner) c2 = { x: (b.x + c1.x) / 2, y: (b.y + c1.y) / 2 };
    d += `C${c1.x} ${c1.y} ${c2.x} ${c2.y} ${b.x} ${b.y}`;
  }
  return d + "Z";
}
const curves = document.getElementById("curves");
OUTLINES.forEach(o => add(curves, "path", { d: outline(o) }));

// Selection handles round the selected curve.
const handles = document.getElementById("handles");
for (const y of [452, 618, 783]) for (const x of [814, 973, 1132]) {
  if (x === 973 && y === 618) continue;
  add(handles, "rect", { x: x - 5.5, y: y - 5.5, width: 11, height: 11, fill: "#000", stroke: "#fff" });
}

const COLORS = "#231815 #3e3a39 #595757 #727171 #898989 #9fa0a0 #b5b5b6 #c9caca #dcdddd #efefef #ffffff #1d2088 #00a0e9 #009944 #fff100 #e60012 #e4007f #b04082 #f08300 #f5b1b2 #897468 #d1cde7 #a599cc #728dc8 #796bb0 #8f82ae #4e658f #58506e #7487a4 #008cd8 #9dd8f8 #b5ccd8 #97a8b0 #6e7f87".split(" ");
const box = document.querySelector(".swatches");
const blank = document.createElement("span");
blank.className = "blank";
box.appendChild(blank);
for (const c of COLORS) {
  const s = document.createElement("span");
  s.style.background = c;
  box.appendChild(s);
}
```
